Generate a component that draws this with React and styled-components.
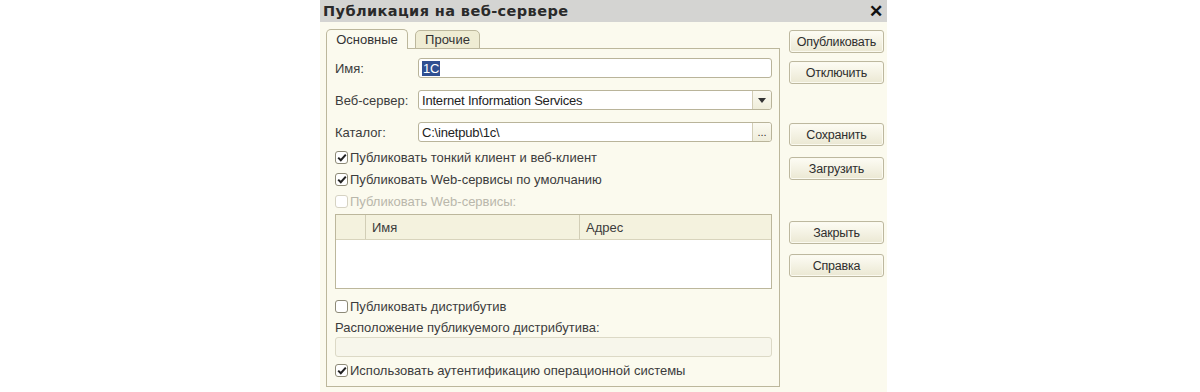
import React from "react";
import styled, { createGlobalStyle } from "styled-components";

const Global = createGlobalStyle`
  html, body { margin: 0; padding: 0; background: #ffffff; }
  body { font-family: "Liberation Sans", Arial, sans-serif; }
`;

const Page = styled.div`
  width: 1200px;
  height: 392px;
  overflow: hidden;
  padding-left: 320px;
  box-sizing: border-box;
`;

const Dialog = styled.div`
  width: 567px;
  height: 392px;
  background: #fbfaee;
  display: flex;
  flex-direction: column;
`;

const TitleBar = styled.div`
  height: 22px;
  background: #d4d4d2;
  display: flex;
  align-items: center;
  justify-content: space-between;
  padding: 0 4px 0 3px;
  font-family: "DejaVu Sans", "Liberation Sans", sans-serif;
  font-weight: bold;
  font-size: 14.5px;
  color: #2a2a2a;
  letter-spacing: 0.4px;
`;

const Close = styled.span`
  font-family: "Liberation Sans", sans-serif;
  font-size: 17px;
  font-weight: bold;
  line-height: 1;
  color: #111;
  letter-spacing: 0;
`;

const Body = styled.div`
  display: flex;
  padding: 7px 0 0 6px;
  gap: 9px;
`;

const Left = styled.div`
  width: 454px;
  display: flex;
  flex-direction: column;
`;

const TabBar = styled.div`
  display: flex;
  gap: 7px;
  height: 20px;
  position: relative;
  z-index: 1;
`;

const Tab = styled.div`
  height: ${(p) => (p.$active ? "20px" : "19px")};
  margin-top: ${(p) => (p.$active ? "0" : "1px")};
  width: ${(p) => p.$w}px;
  box-sizing: border-box;
  border: 1px solid #bcb79c;
  border-bottom: ${(p) => (p.$active ? "none" : "1px solid #bcb79c")};
  border-radius: 5px 5px 0 0;
  background: ${(p) => (p.$active ? "#fbfaee" : "#efecd3")};
  font-size: 13px;
  color: #333;
  display: flex;
  align-items: center;
  justify-content: center;
`;

const Panel = styled.div`
  margin-top: -1px;
  height: 339px;
  box-sizing: border-box;
  border: 1px solid #bcb79c;
  padding: 9px 7px 0 8px;
  display: flex;
  flex-direction: column;
  font-size: 13px;
  color: #3c3c3c;
`;

const FieldRow = styled.div`
  display: flex;
  align-items: center;
  height: 20px;
  margin-bottom: ${(p) => p.$mb ?? 12}px;
`;

const Label = styled.div`
  width: 83px;
  flex: none;
`;

const Input = styled.div`
  flex: 1;
  height: 20px;
  box-sizing: border-box;
  border: 1px solid ${(p) => (p.$disabled ? "#dcd9c6" : "#b9b49a")};
  border-radius: 3px;
  background: ${(p) => (p.$disabled ? "#f7f6eb" : "#ffffff")};
  display: flex;
  align-items: center;
  padding-left: 3px;
  color: #222;
  overflow: hidden;
  letter-spacing: -0.2px;
`;

const InputText = styled.span`
  flex: 1;
  white-space: nowrap;
`;

const Selected = styled.span`
  background: #2f4f91;
  color: #fff;
  padding: 0 1px;
`;

const SideBtn = styled.div`
  width: 18px;
  height: 18px;
  border-left: 1px solid #d2cdb5;
  background: linear-gradient(#fbfaf1, #efedda);
  display: flex;
  align-items: center;
  justify-content: center;
  color: #333;
  font-size: 11px;
  letter-spacing: 0;
  border-radius: 0 2px 2px 0;
`;

const Arrow = styled.span`
  width: 0;
  height: 0;
  border-left: 4px solid transparent;
  border-right: 4px solid transparent;
  border-top: 5px solid #333;
`;

const CheckRow = styled.div`
  display: flex;
  align-items: center;
  height: 22px;
  color: ${(p) => (p.$disabled ? "#b9b7ab" : "#3c3c3c")};
  gap: 2px;
`;

const Box = styled.span`
  width: 13px;
  height: 13px;
  box-sizing: border-box;
  border: 1px solid ${(p) => (p.$disabled ? "#d6d3c3" : "#8d8a77")};
  border-radius: 3px;
  background: #fff;
  display: flex;
  align-items: center;
  justify-content: center;
  flex: none;
`;

const Table = styled.div`
  margin-top: 2px;
  height: 75px;
  box-sizing: border-box;
  border: 1px solid #bcb79c;
  background: #ffffff;
  display: flex;
  flex-direction: column;
`;

const THead = styled.div`
  display: flex;
  height: 24px;
  background: #f4f2de;
  border-bottom: 1px solid #d8d4bc;
`;

const TH = styled.div`
  width: ${(p) => (p.$w ? `${p.$w}px` : "auto")};
  flex: ${(p) => (p.$w ? "none" : "1")};
  border-left: ${(p) => (p.$first ? "none" : "1px solid #d2ceb6")};
  display: flex;
  align-items: center;
  padding-left: ${(p) => (p.$first ? 0 : 6)}px;
  box-sizing: border-box;
`;

const Spacer = styled.div`
  height: ${(p) => p.$h}px;
  flex: none;
`;

const Caption = styled.div`
  height: 20px;
  display: flex;
  align-items: center;
`;

const Right = styled.div`
  width: 95px;
  display: flex;
  flex-direction: column;
  padding-top: 1px;
`;

const Button = styled.div`
  height: 23px;
  box-sizing: border-box;
  border: 1px solid #bdb89f;
  border-radius: 3px;
  background: linear-gradient(#fdfcf4, #ebe8d3);
  box-shadow: inset 0 0 0 1px #fbfaf0;
  display: flex;
  align-items: center;
  justify-content: center;
  font-size: 12.5px;
  color: #2e2e2e;
  letter-spacing: -0.2px;
  margin-top: ${(p) => p.$mt ?? 0}px;
`;

const Check = () => (
  <svg width="10" height="9" viewBox="0 0 10 9">
    <path d="M1.2 4.6 L3.8 7.2 L8.8 1.6" fill="none" stroke="#222" strokeWidth="2" />
  </svg>
);

const CheckItem = ({ checked, disabled, children }) => (
  <CheckRow $disabled={disabled}>
    <Box $disabled={disabled}>{checked && <Check />}</Box>
    <span>{children}</span>
  </CheckRow>
);

export default function App() {
  return (
    <>
      <Global />
      <Page>
        <Dialog>
          <TitleBar>
            <span>Публикация на веб-сервере</span>
            <Close>✕</Close>
          </TitleBar>
          <Body>
            <Left>
              <TabBar>
                <Tab $active $w={82}>Основные</Tab>
                <Tab $w={65}>Прочие</Tab>
              </TabBar>
              <Panel>
                <FieldRow>
                  <Label>Имя:</Label>
                  <Input>
                    <InputText>
                      <Selected>1С</Selected>
                    </InputText>
                  </Input>
                </FieldRow>
                <FieldRow>
                  <Label>Веб-сервер:</Label>
                  <Input>
                    <InputText>Internet Information Services</InputText>
                    <SideBtn>
                      <Arrow />
                    </SideBtn>
                  </Input>
                </FieldRow>
                <FieldRow $mb={4}>
                  <Label>Каталог:</Label>
                  <Input>
                    <InputText>C:\inetpub\1c\</InputText>
                    <SideBtn>...</SideBtn>
                  </Input>
                </FieldRow>
                <CheckItem checked>Публиковать тонкий клиент и веб-клиент</CheckItem>
                <CheckItem checked>Публиковать Web-сервисы по умолчанию</CheckItem>
                <CheckItem disabled>Публиковать Web-сервисы:</CheckItem>
                <Table>
                  <THead>
                    <TH $first $w={29} />
                    <TH $w={214}>Имя</TH>
                    <TH>Адрес</TH>
                  </THead>
                </Table>
                <Spacer $h={6} />
                <CheckItem>Публиковать дистрибутив</CheckItem>
                <Caption>Расположение публикуемого дистрибутива:</Caption>
                <FieldRow $mb={2}>
                  <Input $disabled />
                </FieldRow>
                <CheckItem checked>Использовать аутентификацию операционной системы</CheckItem>
              </Panel>
            </Left>
            <Right>
              <Button>Опубликовать</Button>
              <Button $mt={8}>Отключить</Button>
              <Button $mt={39}>Сохранить</Button>
              <Button $mt={11}>Загрузить</Button>
              <Button $mt={41}>Закрыть</Button>
              <Button $mt={10}>Справка</Button>
            </Right>
          </Body>
        </Dialog>
      </Page>
    </>
  );
}
